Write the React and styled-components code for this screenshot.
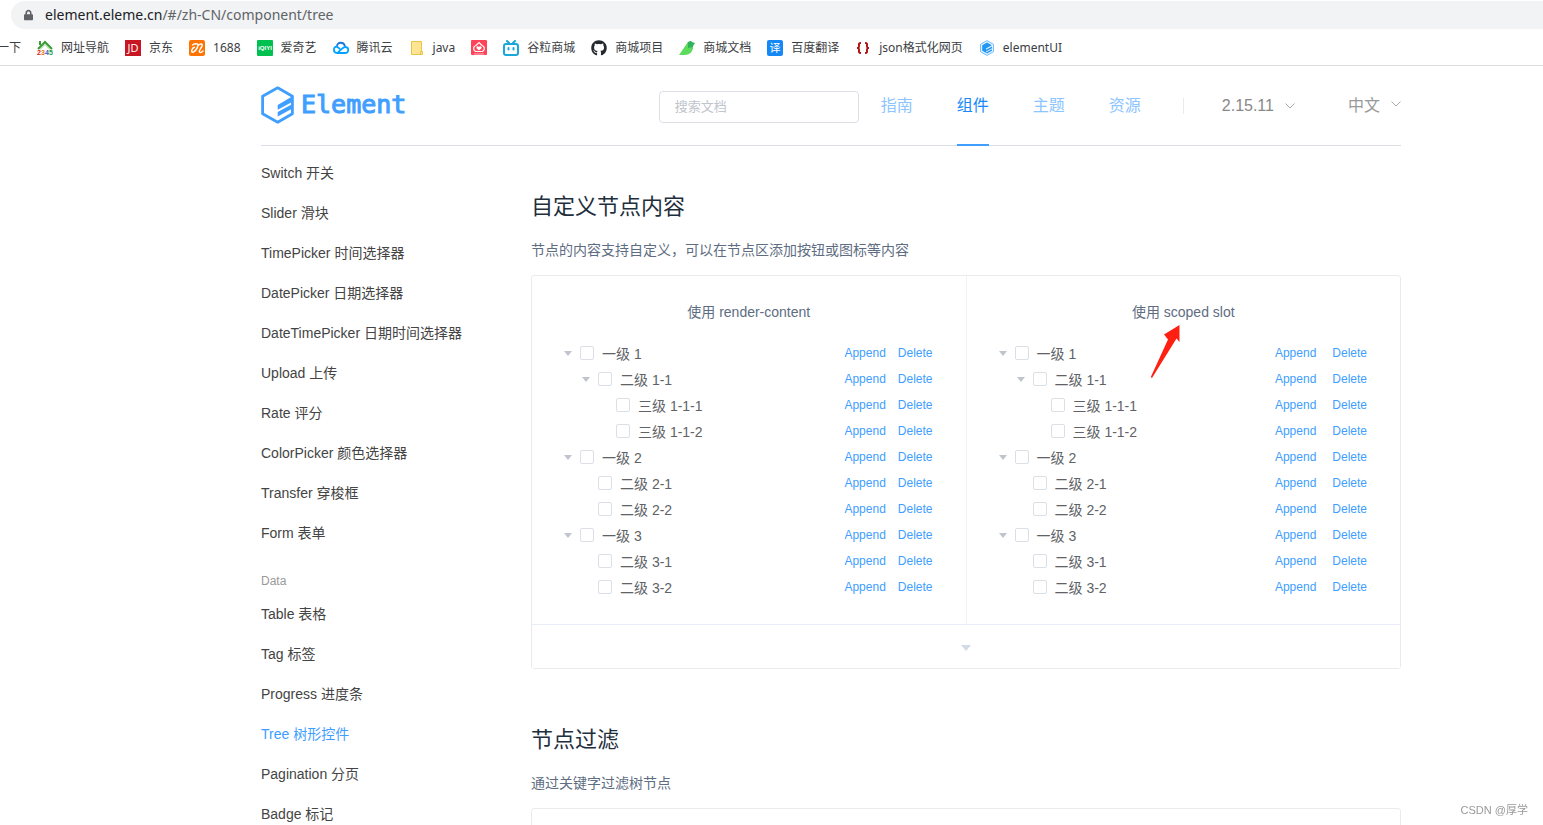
import React from 'react'
import styled, { createGlobalStyle } from 'styled-components'
import { FaGithub, FaLock } from 'react-icons/fa'

const GlobalStyle = createGlobalStyle`
  * {
    box-sizing: border-box;
  }

  body {
    margin: 0;
    background: #fff;
    color: #5e6d82;
    font-family: "Liberation Sans", "Noto Sans CJK SC", sans-serif;
    font-size: 14px;
  }

  a {
    color: inherit;
    text-decoration: none;
  }
`

const Page = styled.div`
  height: 100vh;
  overflow: hidden;
  display: flex;
  flex-direction: column;
`

/* browser bars */

const AddressRow = styled.div`
  flex: none;
  padding: 1px 0 0 11px;
`

const AddressBar = styled.div`
  height: 28px;
  padding-left: 13px;
  display: flex;
  align-items: center;
  gap: 12px;
  border-radius: 14px 0 0 14px;
  background: #f1f3f4;
  color: #5f6368;
  font-family: "Noto Sans", sans-serif;
  font-size: 14px;
  line-height: 20px;

  svg {
    width: 9px;
    height: 12px;
  }
`

const Host = styled.span`
  color: #202124;
`

const Bookmarks = styled.nav`
  flex: none;
  height: 37px;
  padding-top: 1px;
  margin-left: -3px;
  display: flex;
  align-items: center;
  gap: 16px;
  border-bottom: 1px solid #dadce0;
  white-space: nowrap;
`

const Bookmark = styled.a`
  display: flex;
  align-items: center;
  gap: 8px;
  color: #3c4043;
  font-family: "Noto Sans", "Noto Sans CJK SC", sans-serif;
  font-size: 12px;
  line-height: 16px;

  svg {
    flex: none;
    width: 16px;
    height: 16px;
  }
`

/* site header */

const Site = styled.div`
  flex: 1;
  min-height: 0;
  padding: 0 142px 0 261px;
`

const Header = styled.header`
  height: 80px;
  display: flex;
  align-items: stretch;
  border-bottom: 1px solid #dcdfe6;
`

const Logo = styled.a`
  margin-right: auto;
  padding-bottom: 2px;
  display: flex;
  align-items: center;
  gap: 6px;
  color: #409eff;
  font-family: "DejaVu Sans Mono", monospace;
  font-size: 25px;
  line-height: 38px;
  -webkit-text-stroke: 1px currentColor;

  svg {
    width: 34px;
    height: 38px;
  }
`

const Search = styled.input`
  align-self: center;
  width: 200px;
  height: 32px;
  margin: 2px 22px 0 0;
  padding: 0 15px;
  border: 1px solid #dcdfe6;
  border-radius: 4px;
  outline: none;
  color: #606266;
  font-family: inherit;
  font-size: 13px;

  &::placeholder {
    color: #c0c4cc;
  }
`

const Nav = styled.nav`
  display: flex;
  gap: 44px;
  font-size: 16px;
`

const NavLink = styled.a`
  height: 80px;
  padding-bottom: 2px;
  display: flex;
  align-items: center;
  border-bottom: 2px solid ${props => props.$active ? '#409eff' : 'transparent'};
  color: ${props => props.$active ? '#1989fa' : '#8cc5ff'};
`

const Divider = styled.span`
  align-self: center;
  width: 1px;
  height: 16px;
  margin: 0 38px 0 42px;
  background: #ebebeb;
`

const Dropdown = styled.button`
  padding: 0 0 ${props => props.$last ? '3px' : '0'};
  margin-right: ${props => props.$last ? '0' : '53px'};
  display: flex;
  align-items: center;
  gap: 11px;
  border: 0;
  background: none;
  color: ${props => props.$last ? '#999' : '#888'};
  font-family: inherit;
  font-size: 16px;

  svg {
    width: 10px;
    height: 10px;
    color: #aaa;
  }
`

/* side menu */

const Columns = styled.div`
  display: flex;
  gap: 30px;
`

const Side = styled.aside`
  flex: none;
  width: 240px;
  padding-top: 7px;
`

const Menu = styled.ul`
  margin: 0;
  padding: 0;
  list-style: none;
`

const MenuLink = styled.a`
  display: block;
  color: ${props => props.$active ? '#409eff' : '#444'};
  line-height: 40px;
`

const GroupTitle = styled.div`
  padding-top: 15px;
  color: #999;
  font-size: 12px;
  line-height: 26px;
`

/* content */

const Content = styled.main`
  flex: 1;
  min-width: 0;
  padding-top: 45px;
`

const Title = styled.h3`
  margin: 0;
  color: #1f2f3d;
  font-size: 22px;
  font-weight: normal;
  line-height: 32px;
`

const Text = styled.p`
  margin: 17px 0 15px;
  line-height: 20px;
`

const Demo = styled.section`
  margin-bottom: 55px;
  border: 1px solid #ebebeb;
  border-radius: 3px;
`

const Blocks = styled.div`
  display: flex;
  min-height: 348px;
`

const Block = styled.div`
  flex: 1;
  padding: 24px;

  & + & {
    border-left: 1px solid #eff2f6;
  }
`

const BlockTitle = styled.p`
  margin: 0 0 16px;
  line-height: 24px;
  text-align: center;
`

const Pointed = styled.span`
  position: relative;
`

const Arrow = styled.svg`
  position: absolute;
  top: 21px;
  left: 18px;
  width: 31px;
  height: 54px;
  fill: #ff2012;
`

const TreeNode = styled.div`
  height: 26px;
  padding-left: ${props => props.$level * 18}px;
  padding-right: 9px;
  display: flex;
  align-items: center;
  color: #606266;
`

const Toggle = styled.button`
  width: 24px;
  height: 24px;
  padding: 0;
  display: flex;
  align-items: center;
  justify-content: center;
  border: 0;
  background: none;
  color: #c0c4cc;
  visibility: ${props => props.$leaf ? 'hidden' : 'visible'};
`

const Caret = styled.svg`
  width: ${props => props.$size}px;
  height: 6px;
  fill: currentColor;
`

const NodeLabel = styled.label`
  flex: 1;
  display: flex;
  align-items: center;
  gap: 8px;
  line-height: 24px;

  span {
    padding-top: 2px;
  }
`

const Check = styled.input`
  appearance: none;
  width: 14px;
  height: 14px;
  margin: 0;
  border: 1px solid #dcdfe6;
  border-radius: 2px;
  background: #fff;
`

const Actions = styled.span`
  display: flex;
  gap: ${props => props.$wide ? '16px' : '12px'};
`

const Action = styled.button`
  padding: 0;
  border: 0;
  background: none;
  color: #409eff;
  font-family: inherit;
  font-size: 12px;
  line-height: 16px;
`

const DemoControl = styled.button`
  width: 100%;
  height: 44px;
  padding: 2px 0 0;
  display: flex;
  align-items: center;
  justify-content: center;
  border: 0;
  border-top: 1px solid #eaeefb;
  background: #fff;
  color: #d3dce6;
`

const Watermark = styled.div`
  position: fixed;
  right: 15px;
  bottom: 6px;
  color: #999;
  font-size: 11px;
  line-height: 18px;
`

const Hexagon = () => (
  <svg viewBox="0 0 34 38">
    <path
      fill="none"
      stroke="currentColor"
      strokeWidth="2.8"
      strokeLinejoin="round"
      d="M16.7 1.8 31.4 10.3V27.7L16.7 36.2 1.6 27.7V10.3Z"
    />
    <path fill="currentColor" d="M16.700 19 31.500 10.300V15.800L16.700 23.800ZM16.700 26 31.500 18V22.500L16.700 30.500Z" />
  </svg>
)

const House2345 = () => (
  <svg viewBox="0 0 16 16">
    <path fill="none" stroke="#3a9b35" strokeWidth="2" d="M1 9 8 2l7 7M3 1v4" />
    <path fill="none" stroke="#8ccf7c" d="M3 9.500 8 4.500l5 5" />
    <g fontFamily="Liberation Sans" fontSize="7" fontWeight="bold">
      <text x="0" y="15" fill="#e02020">2</text>
      <text x="4" y="15" fill="#e07a10">3</text>
      <text x="8" y="15" fill="#2a62c8">4</text>
      <text x="12" y="15" fill="#289a38">5</text>
    </g>
  </svg>
)

const Jd = () => (
  <svg viewBox="0 0 16 16">
    <rect width="16" height="16" fill="#c81623" />
    <text x="8" y="12" fill="#fff" fontFamily="Open Sans" fontSize="11" textAnchor="middle">JD</text>
  </svg>
)

const Alibaba = () => (
  <svg viewBox="0 0 16 16">
    <rect width="16" height="16" rx="2" fill="#ff7300" />
    <path
      fill="none"
      stroke="#fff"
      strokeWidth="1.500"
      strokeLinecap="round"
      strokeLinejoin="round"
      d="M3.500 5C6 3.300 9.500 3.300 9 5.500 8.500 8 6 12 3.800 12.200 1.500 12 3 8 5.500 7.300M9 5.500C11 3.500 14 3.500 13 6 12 8.500 9.500 10.500 10.500 12 11.300 12.800 13 12 14 11" />
  </svg>
)

const Iqiyi = () => (
  <svg viewBox="0 0 16 16">
    <rect width="16" height="16" rx="1" fill="#00c050" />
    <text x="8" y="10" fill="#fff" fontFamily="Liberation Sans" fontSize="6" fontWeight="bold" textAnchor="middle">iQIYI</text>
  </svg>
)

const TencentCloud = () => (
  <svg viewBox="0 0 16 16" fill="none" strokeWidth="1.800">
    <path stroke="#1675e0" d="M4 6.500C4 1.500 11 1.500 12 6.500" />
    <path stroke="#00a3ff" d="M7 9 4.500 7C2 6 .9 8 .9 9.800.9 12 2.500 13 4 13h8c4.500 0 4-6 .3-6C10 7 8 9.500 4.500 13" />
  </svg>
)

const Folder = () => (
  <svg viewBox="0 0 16 16">
    <path fill="#ffe494" stroke="#e8c548" d="M2.500 1.500h10v9.500l1 1v2.500h-11Z" />
    <path fill="none" stroke="#e8c548" d="M11.500 14v-2.500h2" />
  </svg>
)

const Huawei = () => (
  <svg viewBox="0 0 16 16">
    <rect width="16" height="15" rx="1" fill="#ff4358" />
    <path fill="none" stroke="#fff" strokeWidth="1.200" d="M4.500 11.500C1 9 3 6 5 5.500L8 2.500l3 3C13 6 15 9 11.500 11.500Z" />
    <path fill="#fff" d="M8 10.500 5.500 8.200C5 6 7.500 5.800 8 7 8.500 5.800 11 6 10.500 8.200Z" />
    <path stroke="#ffb3bb" d="M3 14h10" />
  </svg>
)

const Tv = () => (
  <svg viewBox="0 0 16 16" fill="none" stroke="#1ba7d8" strokeWidth="2" strokeLinecap="round">
    <rect x="1" y="4" width="14" height="11" rx="2" />
    <path d="m4 1 2 2M12 1l-2 2M5.500 8v1.500M10.500 8v1.500" />
  </svg>
)

const Bird = () => (
  <svg viewBox="0 0 16 16">
    <path fill="#30b35a" d="M8 4c1-3 4-4 5-2l3 1-2 3c0 5-4 8-8 8Z" />
    <path fill="#5ddb5d" d="M9 2v6l5-1c0 5-4 8-8 8H0Z" />
  </svg>
)

const Translate = () => (
  <svg viewBox="0 0 16 16">
    <rect width="16" height="16" rx="2" fill="#1488f5" />
    <text x="8" y="12" fill="#fff" fontFamily="Noto Sans CJK SC" fontSize="11" textAnchor="middle">译</text>
  </svg>
)

const Braces = () => (
  <svg viewBox="0 0 16 16" fill="none" stroke="#b11212" strokeWidth="2">
    <path d="M6 3C3.500 3 4 4 4 6S3.500 8 2 8c1.500 0 2 0 2 2s-.5 3 2 3M10 3c2.500 0 2 1 2 3s.5 2 2 2c-1.500 0-2 0-2 2s.5 3-2 3" />
  </svg>
)

const ElementIcon = () => (
  <svg viewBox="0 0 16 16">
    <path fill="#e5f3ff" stroke="#73bcfa" d="M8 .600 14.500 4.300v7.400L8 15.400 1.500 11.700V4.300Z" />
    <path fill="#2196f3" d="M8 2.500 12.800 5.200 7 8.500v1.200l6-3.300v1.800L7 11.500v1l6-3.200v1.500L8 13.500 3.200 10.800V5.200Z" />
  </svg>
)

const Chevron = () => (
  <svg viewBox="0 0 10 10" fill="none" stroke="currentColor">
    <path d="m.5 2.500 4.500 4.500 4.500-4.500" />
  </svg>
)

const bookmarks = [
  { text: '一下' },
  { text: '网址导航', icon: <House2345 /> },
  { text: '京东', icon: <Jd /> },
  { text: '1688', icon: <Alibaba /> },
  { text: '爱奇艺', icon: <Iqiyi /> },
  { text: '腾讯云', icon: <TencentCloud /> },
  { text: 'java', icon: <Folder /> },
  { text: '', icon: <Huawei /> },
  { text: '谷粒商城', icon: <Tv /> },
  { text: '商城项目', icon: <FaGithub color="#24292f" /> },
  { text: '商城文档', icon: <Bird /> },
  { text: '百度翻译', icon: <Translate /> },
  { text: 'json格式化网页', icon: <Braces /> },
  { text: 'elementUI', icon: <ElementIcon /> },
]

const formItems = [
  'Switch 开关',
  'Slider 滑块',
  'TimePicker 时间选择器',
  'DatePicker 日期选择器',
  'DateTimePicker 日期时间选择器',
  'Upload 上传',
  'Rate 评分',
  'ColorPicker 颜色选择器',
  'Transfer 穿梭框',
  'Form 表单',
]

const dataItems = [
  'Table 表格',
  'Tag 标签',
  'Progress 进度条',
  'Tree 树形控件',
  'Pagination 分页',
  'Badge 标记',
]

const nodes = [
  { label: '一级 1', level: 0 },
  { label: '二级 1-1', level: 1, open: true },
  { label: '三级 1-1-1', level: 2 },
  { label: '三级 1-1-2', level: 2 },
  { label: '一级 2', level: 0 },
  { label: '二级 2-1', level: 1 },
  { label: '二级 2-2', level: 1 },
  { label: '一级 3', level: 0 },
  { label: '二级 3-1', level: 1 },
  { label: '二级 3-2', level: 1 },
]

const MenuList = ({ items }) => (
  <Menu>
    {items.map(item => (
      <li key={item}>
        <MenuLink href="#" $active={item.startsWith('Tree')}>{item}</MenuLink>
      </li>
    ))}
  </Menu>
)

const Tree = ({ wide }) => (
  <div>
    {nodes.map(node => (
      <TreeNode key={node.label} $level={node.level}>
        <Toggle $leaf={node.level > 0 && !node.open} aria-label="展开">
          <Caret $size={8} viewBox="0 0 8 6"><path d="M0 1h8L4 6Z" /></Caret>
        </Toggle>
        <NodeLabel>
          <Check type="checkbox" />
          <span>{node.label}</span>
        </NodeLabel>
        <Actions $wide={wide}>
          <Action>Append</Action>
          <Action>Delete</Action>
        </Actions>
      </TreeNode>
    ))}
  </div>
)

const App = () => (
  <Page>
    <GlobalStyle />
    <AddressRow>
      <AddressBar>
        <FaLock />
        <span><Host>element.eleme.cn</Host>/#/zh-CN/component/tree</span>
      </AddressBar>
    </AddressRow>
    <Bookmarks>
      {bookmarks.map((item, index) => (
        <Bookmark key={index} href="#">
          {item.icon}
          {item.text && <span>{item.text}</span>}
        </Bookmark>
      ))}
    </Bookmarks>

    <Site>
      <Header>
        <Logo href="#"><Hexagon />Element</Logo>
        <Search placeholder="搜索文档" aria-label="搜索文档" />
        <Nav>
          <NavLink href="#">指南</NavLink>
          <NavLink href="#" $active>组件</NavLink>
          <NavLink href="#">主题</NavLink>
          <NavLink href="#">资源</NavLink>
        </Nav>
        <Divider />
        <Dropdown>2.15.11<Chevron /></Dropdown>
        <Dropdown $last>中文<Chevron /></Dropdown>
      </Header>

      <Columns>
        <Side>
          <MenuList items={formItems} />
          <GroupTitle>Data</GroupTitle>
          <MenuList items={dataItems} />
        </Side>

        <Content>
          <Title>自定义节点内容</Title>
          <Text>节点的内容支持自定义，可以在节点区添加按钮或图标等内容</Text>
          <Demo>
            <Blocks>
              <Block>
                <BlockTitle>使用 render-content</BlockTitle>
                <Tree />
              </Block>
              <Block>
                <BlockTitle>
                  <Pointed>
                    使用 scoped slot
                    <Arrow viewBox="0 0 31 54">
                      <path d="M29.500 0V17L26.500 13.500 2 53 .800 52 18 14.500 14 9.500Z" />
                    </Arrow>
                  </Pointed>
                </BlockTitle>
                <Tree wide />
              </Block>
            </Blocks>
            <DemoControl aria-label="显示代码">
              <Caret $size={10} viewBox="0 0 10 6"><path d="M0 0h10L5 6Z" /></Caret>
            </DemoControl>
          </Demo>

          <Title>节点过滤</Title>
          <Text>通过关键字过滤树节点</Text>
          <Demo>
            <Blocks />
          </Demo>
        </Content>
      </Columns>
    </Site>
    <Watermark>CSDN @厚学</Watermark>
  </Page>
)

export default App
